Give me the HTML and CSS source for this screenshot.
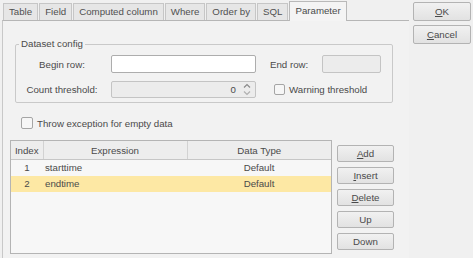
FILE: index.html
```html
<!DOCTYPE html>
<html>
<head>
    <title>Dataset Parameters</title>
    <link rel="stylesheet" href="styles.css">
</head>
<body>
    <div class="dialog">
        <div class="main">
            <div class="tabs">
                <span class="tab">Table</span>
                <span class="tab">Field</span>
                <span class="tab">Computed column</span>
                <span class="tab">Where</span>
                <span class="tab">Order by</span>
                <span class="tab">SQL</span>
                <span class="tab active">Parameter</span>
            </div>
            <div class="panel">
                <fieldset class="config">
                    <legend>Dataset config</legend>
                    <div class="row">
                        <span class="field-label">Begin row:</span>
                        <div class="text-box"></div>
                        <span class="side-label">End row:</span>
                        <div class="text-box short disabled"></div>
                    </div>
                    <div class="row">
                        <span class="field-label">Count threshold:</span>
                        <div class="text-box disabled spinner">
                            <span class="spin-value">0</span>
                            <svg class="spin-arrows" width="8" height="13" viewBox="0 0 8 13">
                                <path d="M1 4.5 L4 1.5 L7 4.5" fill="none" stroke="#8a8a8a" stroke-width="1.2"/>
                                <path d="M1 8.5 L4 11.5 L7 8.5" fill="none" stroke="#b0b0b0" stroke-width="1.2"/>
                            </svg>
                        </div>
                        <label class="check warn"><span class="box"></span>Warning threshold</label>
                    </div>
                </fieldset>

                <label class="check throw"><span class="box"></span>Throw exception for empty data</label>

                <div class="params">
                    <div class="grid">
                        <table>
                            <colgroup>
                                <col class="col-index">
                                <col class="col-expr">
                                <col class="col-type">
                            </colgroup>
                            <thead>
                                <tr>
                                    <th>Index</th>
                                    <th>Expression</th>
                                    <th>Data Type</th>
                                </tr>
                            </thead>
                            <tbody>
                                <tr>
                                    <td class="num">1</td>
                                    <td>starttime</td>
                                    <td class="type">Default</td>
                                </tr>
                                <tr class="selected">
                                    <td class="num">2</td>
                                    <td>endtime</td>
                                    <td class="type">Default</td>
                                </tr>
                            </tbody>
                        </table>
                    </div>
                    <div class="side-buttons">
                        <button><u>A</u>dd</button>
                        <button><u>I</u>nsert</button>
                        <button><u>D</u>elete</button>
                        <button>Up</button>
                        <button>Down</button>
                    </div>
                </div>
            </div>
        </div>

        <div class="actions">
            <button><u>O</u>K</button>
            <button><u>C</u>ancel</button>
        </div>
    </div>
</body>
</html>
```

FILE: styles.css
```css
body {
    font-family: "Liberation Sans", Arial, sans-serif;
    font-size: 9.7px;
    color: #4a4a4a;
    background-color: #f0f0f0;
    margin: 0;
    padding: 0;
}

.dialog {
    display: flex;
    height: 258px;
    overflow: hidden;
}

.main {
    margin-left: 2px;
    width: 407px;
    display: flex;
    flex-direction: column;
}

/* tab strip */

.tabs {
    display: flex;
    align-items: flex-end;
    height: 19px;
    margin-top: 1px;
}

.tab {
    height: 16px;
    line-height: 15px;
    padding: 0 5px;
    margin-left: 1px;
    border: 1px solid #c6c6c6;
    border-bottom: none;
    background-color: #e6e6e6;
    color: #505050;
}

.tab.active {
    position: relative;
    height: 19px;
    line-height: 18px;
    margin-bottom: -1px;
    border-color: #b9b9b9;
    background-color: #f4f4f4;
    color: #4a4a4a;
}

.panel {
    flex: 1;
    border-top: 1px solid #b6b6b6;
    border-left: 1px solid #c8c8c8;
    padding-left: 7px;
    background-color: #f2f2f2;
}

/* dataset config group */

.config {
    margin: 17px 0 0 5px;
    width: 378px;
    box-sizing: border-box;
    padding: 5px 0 4px 0;
    border: 1px solid #c9c9c9;
    border-radius: 2px;
}

.config legend {
    margin-left: 3px;
    padding: 0 2px;
    line-height: 12px;
}

.row {
    display: flex;
    align-items: center;
    height: 18px;
}

.row + .row {
    margin-top: 7px;
}

.field-label {
    width: 92px;
    text-align: center;
}

.text-box {
    width: 145px;
    height: 18px;
    margin-left: 3px;
    box-sizing: border-box;
    border: 1px solid #adadad;
    border-radius: 2px;
    background-color: #ffffff;
}

.text-box.disabled {
    border-color: #c4c4c4;
    background-color: #ececec;
}

.text-box.short {
    width: 59px;
    margin-left: 0;
}

.side-label {
    width: 52px;
    margin-left: 14px;
}

.spinner {
    display: flex;
    align-items: center;
    justify-content: flex-end;
    height: 17px;
}

.spin-arrows {
    margin: 0 4px 0 7px;
}

/* checkboxes */

.check {
    display: flex;
    align-items: center;
}

.check .box {
    width: 11px;
    height: 11px;
    margin-right: 4px;
    border: 1px solid #a5a5a5;
    border-radius: 2px;
    box-sizing: border-box;
    background-color: #f6f6f6;
}

.warn {
    margin-left: 18px;
}

.throw {
    height: 14px;
    margin: 13px 0 0 11px;
}

.throw .box {
    width: 12px;
    height: 12px;
}

/* parameter table */

.params {
    display: flex;
    margin-top: 10px;
}

.grid {
    width: 322px;
    height: 114px;
    box-sizing: border-box;
    border: 1px solid #b4b4b4;
    background-color: #f7f7f7;
}

table {
    width: 100%;
    table-layout: fixed;
    border-collapse: collapse;
}

.col-index {
    width: 32px;
}

.col-expr {
    width: 144px;
}

th {
    height: 18px;
    padding: 0;
    font-weight: normal;
    text-align: center;
    background-color: #ededed;
    border-right: 1px solid #d2d2d2;
    border-bottom: 1px solid #c6c6c6;
}

th:last-child {
    border-right: none;
}

td {
    height: 16px;
    padding: 0 0 0 2px;
    line-height: 14px;
}

td.num,
td.type {
    text-align: center;
    padding: 0;
}

tr.selected td {
    background-color: #fde8a4;
}

.side-buttons {
    display: flex;
    flex-direction: column;
    gap: 5px;
    margin-left: 5px;
    padding-top: 5px;
}

button {
    font-family: inherit;
    font-size: inherit;
    color: #4a4a4a;
    padding: 0;
    border: 1px solid #b3b3b3;
    border-radius: 2px;
    background: linear-gradient(#f1f1f1, #e2e2e2);
}

.side-buttons button {
    width: 57px;
    height: 17px;
}

.actions {
    display: flex;
    flex-direction: column;
    gap: 4px;
    margin: 2px 0 0 4px;
}

.actions button {
    width: 58px;
    height: 19px;
}
```
